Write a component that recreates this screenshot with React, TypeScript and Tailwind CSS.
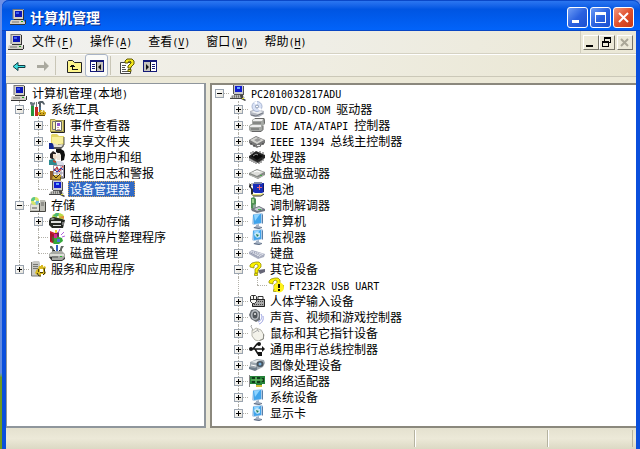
import React from "react";

type IconName =
  | "computer" | "tools" | "event" | "share" | "users" | "perf" | "devmgr"
  | "storage" | "removable" | "defrag" | "diskmgmt" | "services"
  | "dvd" | "ide" | "firewire" | "cpu" | "disk" | "battery" | "modem"
  | "screen" | "display" | "keyboard" | "unknown" | "warning" | "hid"
  | "sound" | "mouse" | "usb" | "camera" | "network";

const questionMark = (
  <>
    <path d="M9 9l7-1v3l-5 2z" fill="#667" />
    <path d="M1 6V4l2-2 4-1h3l2 2v3L9 9v3H6V8l3-2V4L7 3 5 5v2z" fill="#fbf200" stroke="#8a8200" strokeWidth=".7" />
    <path d="M5.500 12.500h3v2h-3z" fill="#fbf200" stroke="#8a8200" strokeWidth=".7" />
  </>
);

const blueScreen = (
  <>
    <path d="M4 1l9-1 1 1v9l-9 2-2-1z" fill="#a9c9e8" />
    <path d="M4 2l8-1v9l-7 1z" fill="#3fa4ec" />
    <path d="M5 2l6-1-5 7z" fill="#8fd4ff" />
    <path d="M13 1l1 1v8l-1 1z" fill="#5d7fa5" />
    <path d="M7 12l3-1v2l3 1-3 2-6-1 3-2z" fill="#a3b0c2" />
    <path d="M5 14l5 1 3-1v1l-3 1-5-1z" fill="#5d6c83" />
  </>
);

const art: Record<IconName, React.ReactNode> = {
  computer: (
    <>
      <path d="M3 0h10l1 1v9H3z" fill="#d4d0c8" />
      <path d="M3 0v10M3 .5h10" stroke="#777" />
      <path d="M14 1v10H4v-1h9V1z" fill="#333" />
      <path d="M5 2h7v6H5z" fill="#0a16b8" />
      <path d="M6 3h3v2H6z" fill="#3b60f0" />
      <path d="M1 11h12l2 2v2H0v-2z" fill="#d4d0c8" />
      <path d="M0 15h15v1H0zM15 11h1v4h-1z" fill="#333" />
      <path d="M2 13h7" stroke="#777" />
      <path d="M11 12h2v1h-2z" fill="#18a018" />
    </>
  ),
  devmgr: (
    <>
      <path d="M4 0h9v9H4z" fill="#c9c9d0" />
      <path d="M5 1h7v6H5z" fill="#101cd0" />
      <path d="M7 2h3v2H7z" fill="#65a8ff" />
      <path d="M13 1h1v9H4V9h9zM3 0h1v9H3z" fill="#555" />
      <path d="M2 10h11l2 3H0z" fill="#bcbcb8" />
      <path d="M2 12h8M4 11h8" stroke="#555" strokeDasharray="1 1" />
      <path d="M0 13h12v1H0z" fill="#444" />
      <path d="M10 10h3v3l3 2-1 1-4-2z" fill="#444" />
      <path d="M12 13h2v1h-2z" fill="#d8d82d" />
    </>
  ),
  tools: (
    <>
      <path d="M0 1h2l1 1 2-1v2L4 4v4H1V4L0 3z" fill="#6b7a80" />
      <path d="M1 5h3v10H1z" fill="#28963a" />
      <path d="M5 6h3v9H5z" fill="#c92b24" />
      <path d="M6 1h1v5H6z" fill="#777" />
      <path d="M8 1l2-1h3l2 3-1 1-2-2h-1v5H9V3H8z" fill="#555f66" />
      <path d="M9 6h2v5H9z" fill="#4c6f92" />
      <path d="M8 11h2V9h2v1l2-1 1 2h1v2l-2 2h-4l-2-1z" fill="#d0a820" />
      <path d="M10 12h1v1h-1zM13 12h1v1h-1zM9 14h6v1H9z" fill="#6f5206" />
      <path d="M11 10h2v1h-2z" fill="#fff087" />
    </>
  ),
  event: (
    <>
      <path d="M1 2h5l1 1h8v12H1z" fill="#e6da7c" />
      <path d="M1.500 2.500h4l1 1h8v11h-13z" fill="none" stroke="#a3984a" />
      <path d="M15.500 3v12.500H2" fill="none" stroke="#222" />
      <path d="M3.500 4.500h3v8h-3z" fill="#f7f2b2" stroke="#777" />
      <path d="M6.500 4.500h6v9h-6z" fill="#fff" stroke="#666" />
      <path d="M8 6h3v3H8z" fill="#8d52d0" />
      <path d="M8 10h2v1H8zM8 12h3v1H8z" fill="#c8a5a5" />
    </>
  ),
  share: (
    <>
      <path d="M2 2l1-1h5l2 2h5v9H2z" fill="#e4d666" />
      <path d="M3 4h11v6l-5 2-6-2z" fill="#f8f09c" />
      <path d="M15 4v8H9" fill="none" stroke="#555" />
      <path d="M0 10h3l2 2v4H0z" fill="#122990" />
      <path d="M4 10l5 2 5-1-3 4H5z" fill="#e4e0d4" />
      <path d="M5 14h7l3-2v1l-3 3H5z" fill="#555" />
    </>
  ),
  users: (
    <>
      <path d="M7 0h5l3 2 1 4-1 5-3 1V6L7 3z" fill="#101010" />
      <path d="M8 4h3l1 3-1 4H8z" fill="#ece5da" />
      <path d="M1 5l3-3 3 2v5l-2 2-4-2z" fill="#282323" />
      <path d="M4 5h3l1 3-1 3-3-2z" fill="#f0ddc8" />
      <path d="M0 11l4-1 4 3 1 3H0z" fill="#2b8b92" />
      <path d="M7 12h5l3 2v2H8z" fill="#d8dde9" />
      <path d="M4 11l3 1v2l-3-1z" fill="#bc4831" />
    </>
  ),
  perf: (
    <>
      <path d="M4 0h11v12H4z" fill="#fff" />
      <path d="M4.500.5h10v11h-10zM5 4h10M5 8h10M8 0v12M12 0v12" fill="none" stroke="#9a93a5" />
      <path d="M5 6l3-4 2 5 4-6" fill="none" stroke="#d02222" />
      <path d="M5 4l3 3 4-4 2 2" fill="none" stroke="#2b35b0" />
      <path d="M1 6h3v9H1z" fill="#8e5a2a" />
      <path d="M4 10h8v5H3z" fill="#cca832" />
      <path d="M4 10l3 3 4-4M3 15h9" fill="none" stroke="#3b2a1a" />
      <path d="M15.500 0v13H11" fill="none" stroke="#111" />
    </>
  ),
  storage: (
    <>
      <path d="M1 6h9V3h5l1 2v9l-2 1H0V8z" fill="#bdbdb5" />
      <path d="M1 8h8v5H1z" fill="#e4e3db" />
      <path d="M0 14.500h15.500V5M9.500 6v8" fill="none" stroke="#44443f" />
      <path d="M11 6h3M11 8h3" stroke="#656560" />
      <circle cx="5" cy="4" r="4" fill="#d7e76b" />
      <path d="M1 4a4 4 0 014-4v4z" fill="#5dc58b" />
      <path d="M5 4h4a4 4 0 01-3 4z" fill="#71b9de" />
      <circle cx="5" cy="4" r="1" fill="#fff" />
      <path d="M2 11h5" stroke="#555" />
    </>
  ),
  removable: (
    <>
      <ellipse cx="9" cy="4" rx="6" ry="4" fill="#b9d946" />
      <path d="M4 3l5 1 1-4-3 0z" fill="#49b675" />
      <path d="M10 4l5-1v3z" fill="#e38b3b" />
      <circle cx="9" cy="4" r="1" fill="#fff" />
      <path d="M1 5l4-1 8 2 3 1-2 8H3L0 12V8z" fill="#242722" />
      <path d="M2 8h10v2H2zM4 12h8v1H4z" fill="#dfdfdd" />
      <path d="M1 6l3-1 2 1-3 1z" fill="#9aa39b" />
      <path d="M13 9h2v3h-2z" fill="#777" />
    </>
  ),
  defrag: (
    <>
      <path d="M1 2l5 2v11l-5-2z" fill="#cc1d35" />
      <path d="M6 4l4-1v11l-4 1z" fill="#7a1c56" />
      <path d="M3 8l4-1 6 2 1 3-4 3-5 0-2-3z" fill="#35a83c" />
      <path d="M5 5h3v4H5z" fill="#d52d93" />
      <path d="M9 4l2-4M12 6l3-3M13 8l3-1" stroke="#b063dc" />
      <path d="M6 1h2v3H6z" fill="#f0d631" />
      <path d="M8 10h3v3H8z" fill="#4878d8" />
      <path d="M2 4v8M4 5v8" stroke="#7d1020" />
    </>
  ),
  diskmgmt: (
    <>
      <path d="M1 1h2l2 3v4H3V4L1 3zM12 1h3l-2 3v4h-2V4z" fill="#606860" />
      <path d="M7 0h2v7H7z" fill="#375fc0" />
      <path d="M4 5h2v3H4zM10 5h1v3h-1z" fill="#222" />
      <path d="M1 8l3-2h9l3 3v4l-3 2H3l-3-3V9z" fill="#a8aaa5" />
      <path d="M1 9h14v2H1z" fill="#dcddd7" />
      <path d="M0 12h3v3h10l3-3v2l-3 2H3z" fill="#333" />
      <path d="M11 11h2v1h-2z" fill="#27b32b" />
      <path d="M3 12h6" stroke="#555" />
    </>
  ),
  services: (
    <>
      <path d="M2 1l2-1h5l1 2v12l-2 1H2z" fill="#c9c9c4" />
      <path d="M1.500 1v14H9M3 3.500h5M3 5.500h5M3 7.500h5" fill="none" stroke="#77776f" />
      <path d="M9 5h2V4h2v2l2-1 1 2-1 1v3l1 1-2 2-1-1h-2v2H9v-2l-2 1-2-2 1-2V9l2-1z" fill="#d8ba22" />
      <path d="M10 8h3v3h-3z" fill="#fff" />
      <path d="M7 12l2 3h2M14 7l1 5-2 2" fill="none" stroke="#332b0b" />
      <path d="M8 8h1v3H8zM10 11h3v1h-3z" fill="#514100" />
    </>
  ),
  dvd: (
    <>
      <path d="M1 10l6-2 8 2v3l-5 3H5l-4-2z" fill="#b3b7c0" />
      <path d="M2 11l5-2 7 2-5 2z" fill="#eef0f3" />
      <circle cx="8" cy="5.500" r="5" fill="#d9e2f6" stroke="#a9b6d2" />
      <path d="M8 5l-3-4 3-1zM8 6l3 4 2-2z" fill="#fff" />
      <circle cx="8" cy="5.500" r="1.500" fill="#fff" stroke="#8997b0" />
      <path d="M2 14l5 1 7-3" stroke="#717680" fill="none" />
    </>
  ),
  ide: (
    <>
      <path d="M3 3l3-2h9l1 2v4l-2 2H4L3 7z" fill="#a5a8a4" />
      <path d="M4 3l2-1h8l-1 2H4z" fill="#eee" />
      <path d="M0 9l2-2h11l1 2v4l-2 2H2l-2-2z" fill="#a5a8a4" />
      <path d="M1 9l2-1h9v2H1z" fill="#eee" />
      <path d="M4 6h8M2 12h8M3 14.500h9l2-2V9M6 1.500h9l.5 5" fill="none" stroke="#666" />
    </>
  ),
  firewire: (
    <>
      <path d="M0 7l7-4 9 4v3l-8 5-8-5z" fill="#777" />
      <path d="M1 7l6-3 8 3-7 4z" fill="#d5d5d1" />
      <path d="M5 7l4-2 3 2-4 2z" fill="#999" />
      <path d="M2 10v2M5 12v2M11 12v2M14 10v2" stroke="#333" />
      <path d="M8 12h3v1H8z" fill="#eee" />
    </>
  ),
  cpu: (
    <>
      <path d="M0 7l7-5 9 4v3l-7 5-9-5z" fill="#252525" />
      <path d="M2 7l5-3 7 3-6 4z" fill="#080808" />
      <path d="M1 9v3M3 10v3M5 11v3M7 12v3M10 12v3M12 11v3M14 9v3M2 5V3M4 4V2M11 4V2M14 5V3" stroke="#555" />
      <path d="M4 7l3-2 2 1" stroke="#999" fill="none" />
    </>
  ),
  disk: (
    <>
      <path d="M0 8l8-4 8 3v3l-7 4-9-4z" fill="#858985" />
      <path d="M1 8l7-3 7 2-7 4z" fill="#dededb" />
      <path d="M5 7l3-1 3 1" stroke="#fff" fill="none" />
      <path d="M1 10l8 3 6-3" stroke="#b7b7b3" fill="none" />
      <path d="M11 10h2v1h-2z" fill="#43a843" />
    </>
  ),
  battery: (
    <>
      <path d="M5 2V1h8v1h2v9l-2 1H6l-2-1V3z" fill="#172cb8" />
      <path d="M5 1h8v2H5z" fill="#7c86a8" />
      <path d="M10.500 4v5M8 6.500h5" stroke="#e86a7c" />
      <path d="M14 3h1v8h-1z" fill="#1a1b66" />
      <path d="M1 3h1v3l2 2v5h3v2H4l-2-2V8L0 6V4z" fill="#2b2b2b" />
      <path d="M0 2v3M3 2v3" stroke="#777" />
      <path d="M3 13h7l4-1v2l-4 1H4z" fill="#e6e07e" />
      <path d="M4 15h8l3-2" stroke="#333" fill="none" />
    </>
  ),
  modem: (
    <>
      <path d="M2 1l3-1 2 2v10l-3 2-2-3z" fill="#4f8f55" />
      <path d="M3 2h2v4H3z" fill="#9cd08f" />
      <path d="M4 8l3-1v4l-3 1z" fill="#90a99c" />
      <path d="M2 12l8-3 6 3v2l-8 2-5-2z" fill="#717681" />
      <path d="M5 12l5-2 4 2-6 2z" fill="#c6cbd2" />
      <path d="M9 12h3v1H9z" fill="#3bb44d" />
    </>
  ),
  screen: blueScreen,
  display: (
    <>
      {blueScreen}
      <path d="M5 5l3-2 3 1v4L8 9 6 7z" fill="#c4e7fa" />
      <path d="M7 5l3 1-2 2z" fill="#287e54" />
    </>
  ),
  keyboard: (
    <>
      <path d="M0 7l3-2 13 4-1 3-6 2-9-5z" fill="#a8adbf" />
      <path d="M1 7l2-1 12 3-5 3z" fill="#e5e7f0" />
      <path d="M3 7l9 4M5 7l8 3M2 8l8 4" stroke="#888fa5" strokeDasharray="1 1" />
    </>
  ),
  unknown: questionMark,
  warning: (
    <>
      {questionMark}
      <circle cx="11" cy="10.500" r="5" fill="#fff21a" />
      <path d="M10 7h2v4h-2zM10 12h2v2h-2z" fill="#171700" />
    </>
  ),
  hid: (
    <>
      <path d="M7 6h9v8H3v-4z" fill="#a8a8a8" />
      <path d="M7 6.500h8.500v7h-12v-3" fill="none" stroke="#222" />
      <path d="M5 11.500h10M9 8.500h6" stroke="#444" strokeDasharray="1 1" />
      <path d="M1.500 3.500l1-1h4l1 1v5l-2 2h-2l-2-2z" fill="#f5f5f2" stroke="#333" />
      <path d="M4.500 3v3M2 6.500h5M9 6V3.500h5V6" fill="none" stroke="#333" />
    </>
  ),
  sound: (
    <>
      <path d="M2 1l5-1 4 3v8l-4 2-5-3-2-4z" fill="#6b7076" />
      <ellipse cx="6" cy="6" rx="4" ry="5" fill="#b8bdc2" />
      <ellipse cx="6" cy="6" rx="2.500" ry="3.500" fill="#50555a" />
      <circle cx="6" cy="5" r="1" fill="#eee" />
      <path d="M12 5c2 3 0 7-3 8M14 7c1 4-1 7-4 8" fill="none" stroke="#9da4e2" />
    </>
  ),
  mouse: (
    <>
      <path d="M3 0c-3 2 2 3 0 6" fill="none" stroke="#999" />
      <path d="M3 6l4-3 5 2 3 5-1 4-4 2-4-1-3-4z" fill="#f3f2ea" stroke="#b5b4aa" />
      <path d="M4 8l5-3M8 4l2 3" stroke="#aaa" />
      <path d="M14.500 9v5l-4 1.500" fill="none" stroke="#8d8d87" />
    </>
  ),
  usb: (
    <>
      <path d="M1 8h13M4 8l4-5h3M6 8l3 5h3" fill="none" stroke="#151515" strokeWidth="1.500" />
      <path d="M13 5l3 3-3 3z" fill="#151515" />
      <circle cx="2" cy="8" r="2" fill="#151515" />
      <circle cx="10" cy="3" r="2" fill="#151515" />
      <path d="M9 11h4v4H9z" fill="#151515" />
    </>
  ),
  camera: (
    <>
      <path d="M1 5l7-3 7 1 1 3-2 4-6 3-8-2 1-3z" fill="#9ea8b0" />
      <path d="M2 5l6-2 5 1-6 2z" fill="#e6eaec" />
      <ellipse cx="11" cy="7" rx="3.500" ry="3" fill="#49545e" />
      <circle cx="11" cy="7" r="1.500" fill="#77b0dc" />
      <path d="M0 10l6 1 2-1v3l-2 1-6-2z" fill="#707e8b" />
      <path d="M2 8l5 1" stroke="#fff" />
    </>
  ),
  network: (
    <>
      <path d="M1 3h15v8h-3v2H7v-2H1z" fill="#27833a" />
      <path d="M0 2h1v12H0z" fill="#888" />
      <path d="M3 4h3v2H3zM8 4h3v2H8zM3 8h3v2H3zM8 8h3v2H8zM13 5h2v4h-2z" fill="#103e1c" />
      <path d="M2 7h12M7 4v6" stroke="#74c46d" />
      <path d="M7 12h6v2H7z" fill="#d0bd35" />
    </>
  ),
};

function Icon({ name }: { name: IconName }) {
  return (
    <svg viewBox="0 0 16 16" className="size-4 shrink-0" aria-hidden="true">
      {art[name]}
    </svg>
  );
}

/* Latin runs are set in a six-pixel monospace next to twelve-pixel ideographs. */
function Label({ text }: { text: string }) {
  const parts = text.split(/([\x20-\x7e]+)/).filter(Boolean);
  return (
    <>
      {parts.map((part, i) =>
        /^[\x20-\x7e]/.test(part) ? (
          <span key={i} className="font-['DejaVu_Sans_Mono','Liberation_Mono',monospace] text-[10px]">
            {part}
          </span>
        ) : (
          <span key={i}>{part}</span>
        ),
      )}
    </>
  );
}

/* Each guide column: "|" passes through, "t" branches, "l" ends, "r" is the root, " " is blank. */
type Row = {
  text: string;
  icon: IconName;
  guides: string;
  toggle?: "+" | "-";
  selected?: boolean;
};

function Guide({ kind, toggle, label }: { kind: string; toggle?: "+" | "-"; label: string }) {
  return (
    <span className="relative h-4 w-[19px] shrink-0">
      {(kind === "|" || kind === "t") && (
        <span className="absolute top-0 left-[9px] h-4 border-l border-dotted border-[#b3b1a9]" />
      )}
      {kind === "l" && <span className="absolute top-0 left-[9px] h-2 border-l border-dotted border-[#b3b1a9]" />}
      {(kind === "t" || kind === "l" || kind === "r") && (
        <span className="absolute top-2 right-0 left-[9px] border-t border-dotted border-[#b3b1a9]" />
      )}
      {toggle && (
        <button
          type="button"
          aria-label={label}
          className="absolute top-1 left-[5px] block size-[9px] border border-[#9aa4b0] bg-linear-to-br from-white to-[#e6e3da]"
        >
          <span className="absolute top-[3px] left-px h-px w-[5px] bg-black" />
          {toggle === "+" && <span className="absolute top-px left-[3px] h-[5px] w-px bg-black" />}
        </button>
      )}
    </span>
  );
}

function Tree({ rows, label }: { rows: Row[]; label: string }) {
  return (
    <ul role="tree" aria-label={label} className="flex flex-col">
      {rows.map((row) => (
        <li
          key={row.text}
          role="treeitem"
          aria-selected={!!row.selected}
          aria-level={row.guides.length + 1}
          className="flex h-4 items-center whitespace-nowrap"
        >
          {row.guides.split("").map((g, i, all) => (
            <Guide key={i} kind={g} label={row.text} toggle={i === all.length - 1 ? row.toggle : undefined} />
          ))}
          <span className="ml-px flex items-center gap-[3px]">
            <Icon name={row.icon} />
            <span
              className={
                row.selected
                  ? "h-4 border border-dotted border-[#d5a45c] bg-[#316ac5] pr-1 pl-px leading-[14px] text-white"
                  : "h-4 pr-1 pl-0.5 leading-4"
              }
            >
              <Label text={row.text} />
            </span>
          </span>
        </li>
      ))}
    </ul>
  );
}

const consoleRows: Row[] = [
  { text: "计算机管理(本地)", icon: "computer", guides: "" },
  { text: "系统工具", icon: "tools", guides: "t", toggle: "-" },
  { text: "事件查看器", icon: "event", guides: "|t", toggle: "+" },
  { text: "共享文件夹", icon: "share", guides: "|t", toggle: "+" },
  { text: "本地用户和组", icon: "users", guides: "|t", toggle: "+" },
  { text: "性能日志和警报", icon: "perf", guides: "|t", toggle: "+" },
  { text: "设备管理器", icon: "devmgr", guides: "|l", selected: true },
  { text: "存储", icon: "storage", guides: "t", toggle: "-" },
  { text: "可移动存储", icon: "removable", guides: "|t", toggle: "+" },
  { text: "磁盘碎片整理程序", icon: "defrag", guides: "|t" },
  { text: "磁盘管理", icon: "diskmgmt", guides: "|l" },
  { text: "服务和应用程序", icon: "services", guides: "l", toggle: "+" },
];

const deviceRows: Row[] = [
  { text: "PC2010032817ADU", icon: "devmgr", guides: "r", toggle: "-" },
  { text: "DVD/CD-ROM 驱动器", icon: "dvd", guides: " t", toggle: "+" },
  { text: "IDE ATA/ATAPI 控制器", icon: "ide", guides: " t", toggle: "+" },
  { text: "IEEE 1394 总线主控制器", icon: "firewire", guides: " t", toggle: "+" },
  { text: "处理器", icon: "cpu", guides: " t", toggle: "+" },
  { text: "磁盘驱动器", icon: "disk", guides: " t", toggle: "+" },
  { text: "电池", icon: "battery", guides: " t", toggle: "+" },
  { text: "调制解调器", icon: "modem", guides: " t", toggle: "+" },
  { text: "计算机", icon: "screen", guides: " t", toggle: "+" },
  { text: "监视器", icon: "display", guides: " t", toggle: "+" },
  { text: "键盘", icon: "keyboard", guides: " t", toggle: "+" },
  { text: "其它设备", icon: "unknown", guides: " t", toggle: "-" },
  { text: "FT232R USB UART", icon: "warning", guides: " |l" },
  { text: "人体学输入设备", icon: "hid", guides: " t", toggle: "+" },
  { text: "声音、视频和游戏控制器", icon: "sound", guides: " t", toggle: "+" },
  { text: "鼠标和其它指针设备", icon: "mouse", guides: " t", toggle: "+" },
  { text: "通用串行总线控制器", icon: "usb", guides: " t", toggle: "+" },
  { text: "图像处理设备", icon: "camera", guides: " t", toggle: "+" },
  { text: "网络适配器", icon: "network", guides: " t", toggle: "+" },
  { text: "系统设备", icon: "screen", guides: " t", toggle: "+" },
  { text: "显示卡", icon: "display", guides: " l", toggle: "+" },
];

const menus = [
  ["文件", "F"],
  ["操作", "A"],
  ["查看", "V"],
  ["窗口", "W"],
  ["帮助", "H"],
];

function TitleBar() {
  const base = "flex size-[21px] items-center justify-center rounded-[3px] border border-white";
  const blue = base + " bg-linear-to-br from-[#6f9cf5] via-[#2b62e0] to-[#1c50d0]";
  return (
    <header className="flex h-[31px] shrink-0 items-center rounded-t-[7px] bg-linear-to-b from-[#2f7af2] via-[#0055e2] via-30% to-[#0264fb] pt-1 pr-1.5 pl-2 shadow-[inset_0_-1px_0_#0846c4,inset_0_1px_0_#0a48c8]">
      <div className="flex flex-1 items-center gap-1 pb-0.5">
        <Icon name="computer" />
        <h1 className="text-[14px] leading-5 font-bold text-white [text-shadow:1px_1px_0_#0b2b86]">计算机管理</h1>
      </div>
      <div className="flex gap-0.5">
        <button type="button" aria-label="最小化" className={blue}>
          <svg viewBox="0 0 19 19" className="size-[19px]"><path d="M4 12h7v3H4z" fill="#fff" /></svg>
        </button>
        <button type="button" aria-label="最大化" className={blue}>
          <svg viewBox="0 0 19 19" className="size-[19px]"><path d="M4 4h11v11H4zM5 7v7h9V7z" fill="#fff" fillRule="evenodd" /></svg>
        </button>
        <button type="button" aria-label="关闭" className={base + " bg-linear-to-br from-[#f0977c] via-[#e0502c] to-[#c73a14]"}>
          <svg viewBox="0 0 19 19" className="size-[19px]"><path d="M5 5l9 9M14 5l-9 9" stroke="#fff" strokeWidth="2" /></svg>
        </button>
      </div>
    </header>
  );
}

function MenuBar() {
  const child =
    "flex h-[15px] w-4 items-center justify-center border border-t-white border-r-[#77756a] border-b-[#77756a] border-l-white bg-[#ece9d8]";
  return (
    <nav className="flex h-[23px] shrink-0 items-center border-b border-[#d5d2c3] bg-linear-to-r from-[#f1f1ef] via-[#efeee6] to-[#ebe8d6] pr-[3px] pl-0.5">
      <Icon name="computer" />
      <div className="ml-2 flex flex-1 gap-4">
        {menus.map(([name, key]) => (
          <button key={key} type="button" className="leading-4 whitespace-nowrap">
            {name}
            <span className="font-['DejaVu_Sans_Mono','Liberation_Mono',monospace] text-[10px]">
              (<u className="underline-offset-2">{key}</u>)
            </span>
          </button>
        ))}
      </div>
      <div className="flex h-full items-center border-l border-[#d0cdbd] pl-0.5">
        <button type="button" aria-label="最小化子窗口" className={child}>
          <svg viewBox="0 0 14 13" className="h-[13px] w-3.5"><path d="M2 9h7v2H2z" /></svg>
        </button>
        <button type="button" aria-label="还原子窗口" className={child}>
          <svg viewBox="0 0 14 13" className="h-[13px] w-3.5">
            <path d="M4 1h7v6H9v4H2V5h2zM5 3v2h4v1h1V3zM3 7v3h5V7z" fillRule="evenodd" />
          </svg>
        </button>
        <button type="button" aria-label="关闭子窗口" className={child + " ml-0.5"}>
          <svg viewBox="0 0 14 13" className="h-[13px] w-3.5"><path d="M3 3l7 7M10 3l-7 7" stroke="#aaa797" strokeWidth="2" /></svg>
        </button>
      </div>
    </nav>
  );
}

function PaneArt({ flip }: { flip?: boolean }) {
  return (
    <svg viewBox="0 0 16 16" className="size-4" aria-hidden="true">
      <path d="M1 2h14v12H1z" fill="#141a78" />
      <path d="M2 4h12v9H2z" fill="#fff" />
      {flip ? (
        <>
          <path d="M2 4h6v9H2z" fill="#c6c3bc" />
          <path d="M4 6l3 3-3 3zM8 4h1v9H8z" fill="#111" />
          <path d="M10 6.500h3M10 8.500h3M10 10.500h3" stroke="#141a78" />
        </>
      ) : (
        <>
          <path d="M8 4h6v9H8z" fill="#c6c3bc" />
          <path d="M12 6L9 9l3 3zM7 4h1v9H7z" fill="#111" />
          <path d="M3 6.500h3M3 8.500h3M3 10.500h3" stroke="#141a78" />
        </>
      )}
    </svg>
  );
}

function ToolBar() {
  const tool = "flex size-[23px] items-center justify-center";
  return (
    <div
      role="toolbar"
      aria-label="工具栏"
      className="flex h-[23px] shrink-0 items-center border-t border-b border-t-white border-b-[#cbc8b8] bg-linear-to-r from-[#f1f0eb] via-[#efede2] to-[#e9e6d2] pl-px"
    >
      <button type="button" aria-label="后退" className={tool}>
        <svg viewBox="0 0 16 16" className="size-4">
          <path d="M2 8.500l5-4v3h7v2H7v3z" fill="#3fdede" stroke="#123d45" />
        </svg>
      </button>
      <button type="button" aria-label="前进" disabled className={tool}>
        <svg viewBox="0 0 16 16" className="size-4"><path d="M15 8l-5-5v4H3v3h7v3z" fill="#aaa99f" /></svg>
      </button>
      <span className="mx-0.5 h-[19px] w-px bg-[#c9c6b7]" />
      <button type="button" aria-label="向上" className={tool + " ml-1"}>
        <svg viewBox="0 0 16 16" className="size-4">
          <path d="M1.500 14.500v-11l1-1h4l2 2h7v10z" fill="#fdf58c" stroke="#222" />
          <path d="M7 11.500h5M6.500 12V7M4 8.500h5M5 7.500h3" stroke="#111" fill="none" />
        </svg>
      </button>
      <button
        type="button"
        aria-label="显示控制台树"
        aria-pressed="true"
        className={tool + " rounded-[3px] border border-[#a9b4c6] bg-[#fbfbf9]"}
      >
        <PaneArt />
      </button>
      <span className="mx-0.5 h-[19px] w-px bg-[#c9c6b7]" />
      <button type="button" aria-label="帮助主题" className={tool + " ml-0.5"}>
        <svg viewBox="0 0 16 16" className="size-4">
          <path d="M1.500 4.500h10v11h-10z" fill="#fff" stroke="#444" />
          <path d="M3 7.500h4M3 9.500h3M3 11.500h4M3 13.500h6" stroke="#555" />
          <path d="M6 5V3l2-2h5l2 2v3l-3 3v1H9V8l3-3V4l-1-1-2 1v1z" fill="#f4e71b" stroke="#5f5900" />
          <path d="M9 11.500h3v2H9z" fill="#f4e71b" stroke="#5f5900" />
        </svg>
      </button>
      <button type="button" aria-label="显示操作窗格" className={tool}>
        <PaneArt flip />
      </button>
    </div>
  );
}

export default function App() {
  return (
    <div className="flex min-h-screen bg-linear-to-b from-[#6d8fe6] from-0% via-[#5f8ae0] via-83% to-[#6f9a1f] to-84% pl-0.5 font-['Noto_Sans_CJK_SC',sans-serif] text-[12px] text-black">
      <div className="flex min-w-0 flex-1 flex-col rounded-t-[7px] bg-[#0a4fdc]">
        <TitleBar />
        <div className="mr-1 ml-1 flex flex-1 flex-col bg-[#ece9d8]">
          <MenuBar />
          <ToolBar />
          <main className="flex flex-1 gap-1 pt-1.5">
            <section className="w-[200px] shrink-0 border-t border-r-2 border-b-2 border-l border-[#8f969c] bg-white pt-px pl-[3px]">
              <Tree rows={consoleRows} label="控制台树" />
            </section>
            <section className="min-w-0 flex-1 border-t-2 border-b-2 border-l-2 border-[#8b887d] bg-white">
              <div className="-ml-0.5">
                <Tree rows={deviceRows} label="设备" />
              </div>
            </section>
          </main>
          <footer className="flex h-[21px] shrink-0 bg-linear-to-b from-[#e4e1cf] via-[#ece9d8] to-[#dcd9c4] py-0.5">
            <span className="flex-1" />
            <span className="w-[133px] border-l border-[#b5b3a0] shadow-[inset_1px_0_0_#fff]" />
            <span className="mr-[3px] w-[86px] border-r border-l border-[#b5b3a0] shadow-[inset_1px_0_0_#fff]" />
          </footer>
        </div>
      </div>
    </div>
  );
}
